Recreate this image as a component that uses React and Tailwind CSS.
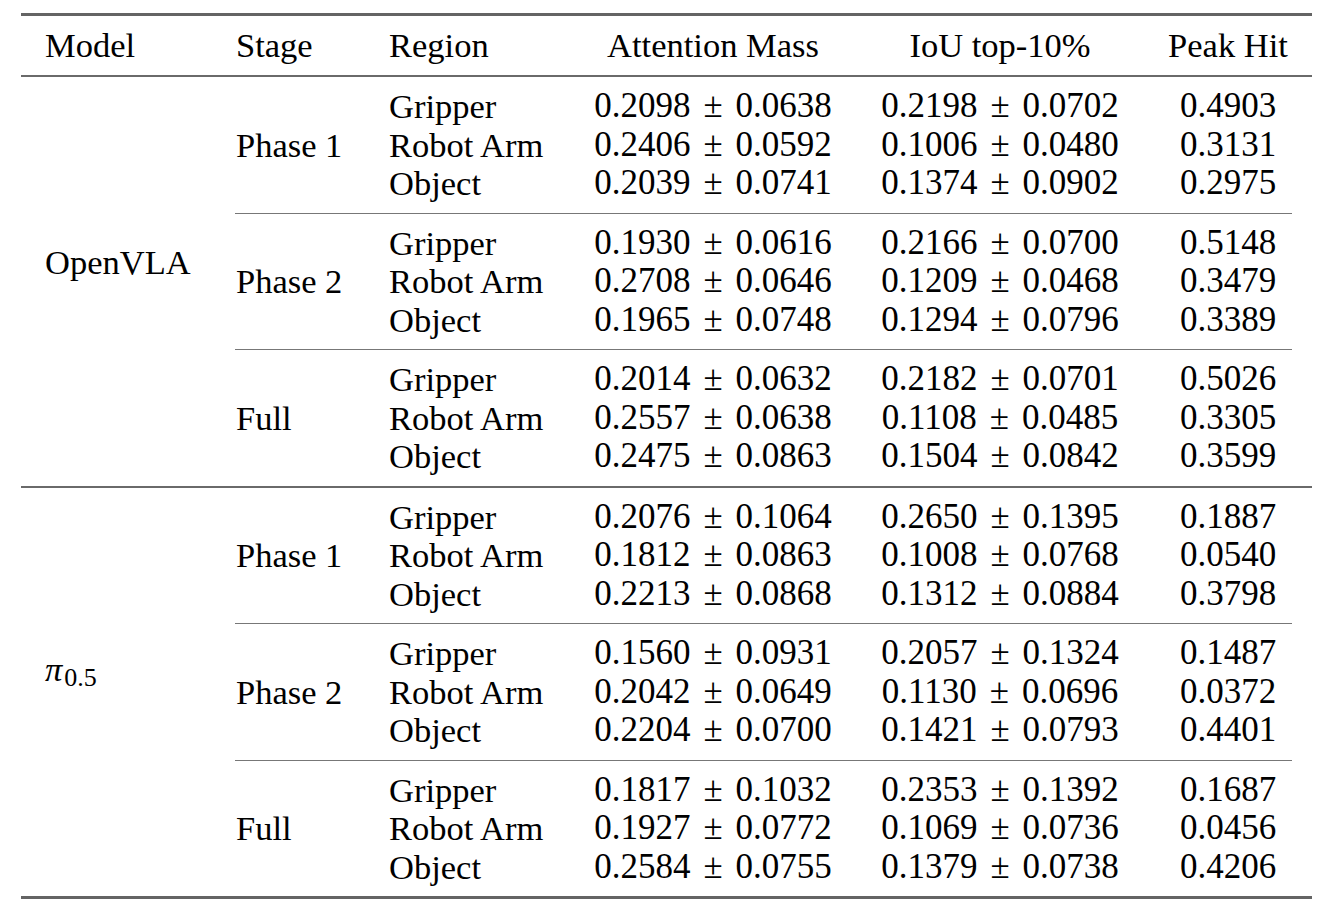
const groups = [
  {
    model: "OpenVLA",
    stages: [
      {
        name: "Phase 1",
        rows: [
          ["Gripper", "0.2098", "0.0638", "0.2198", "0.0702", "0.4903"],
          ["Robot Arm", "0.2406", "0.0592", "0.1006", "0.0480", "0.3131"],
          ["Object", "0.2039", "0.0741", "0.1374", "0.0902", "0.2975"],
        ],
      },
      {
        name: "Phase 2",
        rows: [
          ["Gripper", "0.1930", "0.0616", "0.2166", "0.0700", "0.5148"],
          ["Robot Arm", "0.2708", "0.0646", "0.1209", "0.0468", "0.3479"],
          ["Object", "0.1965", "0.0748", "0.1294", "0.0796", "0.3389"],
        ],
      },
      {
        name: "Full",
        rows: [
          ["Gripper", "0.2014", "0.0632", "0.2182", "0.0701", "0.5026"],
          ["Robot Arm", "0.2557", "0.0638", "0.1108", "0.0485", "0.3305"],
          ["Object", "0.2475", "0.0863", "0.1504", "0.0842", "0.3599"],
        ],
      },
    ],
  },
  {
    model: "pi",
    stages: [
      {
        name: "Phase 1",
        rows: [
          ["Gripper", "0.2076", "0.1064", "0.2650", "0.1395", "0.1887"],
          ["Robot Arm", "0.1812", "0.0863", "0.1008", "0.0768", "0.0540"],
          ["Object", "0.2213", "0.0868", "0.1312", "0.0884", "0.3798"],
        ],
      },
      {
        name: "Phase 2",
        rows: [
          ["Gripper", "0.1560", "0.0931", "0.2057", "0.1324", "0.1487"],
          ["Robot Arm", "0.2042", "0.0649", "0.1130", "0.0696", "0.0372"],
          ["Object", "0.2204", "0.0700", "0.1421", "0.0793", "0.4401"],
        ],
      },
      {
        name: "Full",
        rows: [
          ["Gripper", "0.1817", "0.1032", "0.2353", "0.1392", "0.1687"],
          ["Robot Arm", "0.1927", "0.0772", "0.1069", "0.0736", "0.0456"],
          ["Object", "0.2584", "0.0755", "0.1379", "0.0738", "0.4206"],
        ],
      },
    ],
  },
];

function PlusMinus({ a, b }) {
  return (
    <span className="text-[35px]">
      {a}
      <span className="mx-[13px]">±</span>
      {b}
    </span>
  );
}

function ModelLabel({ name }) {
  if (name === "pi") {
    return (
      <span className="relative -top-[6px]">
        <span className="italic">π</span>
        <span className="relative top-[5px] ml-[2px] text-[26px]">0.5</span>
      </span>
    );
  }
  return <span className="relative -top-[2px]">{name}</span>;
}

function Stage({ stage, last }) {
  return (
    <>
      <div className="flex">
        <div className="flex w-[154px] items-center pl-px">{stage.name}</div>
        <div className="flex flex-col py-[10px]">
          {stage.rows.map((r) => (
            <div key={r[0]} className="flex h-[38.5px] items-center">
              <div className="w-[181px]">{r[0]}</div>
              <div className="flex w-[286px] justify-center">
                <PlusMinus a={r[1]} b={r[2]} />
              </div>
              <div className="flex w-[288px] justify-center">
                <PlusMinus a={r[3]} b={r[4]} />
              </div>
              <div className="flex w-[168px] justify-center text-[35px]">{r[5]}</div>
            </div>
          ))}
        </div>
      </div>
      {!last && <div className="mr-[20px] h-px bg-[#777]" />}
    </>
  );
}

export default function App() {
  return (
    <div className="min-h-[920px] bg-white pl-[21px] pt-[13px] font-['Liberation_Serif',serif] text-[34.5px] leading-[38.5px] text-black">
      <div className="w-[1291px]">
        <div className="h-[3px] bg-[#646464]" />
        <div className="flex h-[59px] items-center">
          <div className="w-[214px] pl-[24px]">Model</div>
          <div className="w-[154px] pl-px">Stage</div>
          <div className="w-[181px]">Region</div>
          <div className="w-[286px] text-center">Attention Mass</div>
          <div className="w-[288px] text-center">IoU top-10%</div>
          <div className="w-[168px] text-center">Peak Hit</div>
        </div>
        <div className="h-[2px] bg-[#6a6a6a]" />
        {groups.map((g, gi) => (
          <div key={g.model}>
            <div className="flex">
              <div className="w-[214px] pl-[24px] pt-[168px]">
                <ModelLabel name={g.model} />
              </div>
              <div className="flex flex-col">
                {g.stages.map((s, si) => (
                  <Stage key={s.name} stage={s} last={si === g.stages.length - 1} />
                ))}
              </div>
            </div>
            {gi === 0 ? (
              <div className="h-[2px] bg-[#6a6a6a]" />
            ) : (
              <div className="h-[3px] bg-[#646464]" />
            )}
          </div>
        ))}
      </div>
    </div>
  );
}
